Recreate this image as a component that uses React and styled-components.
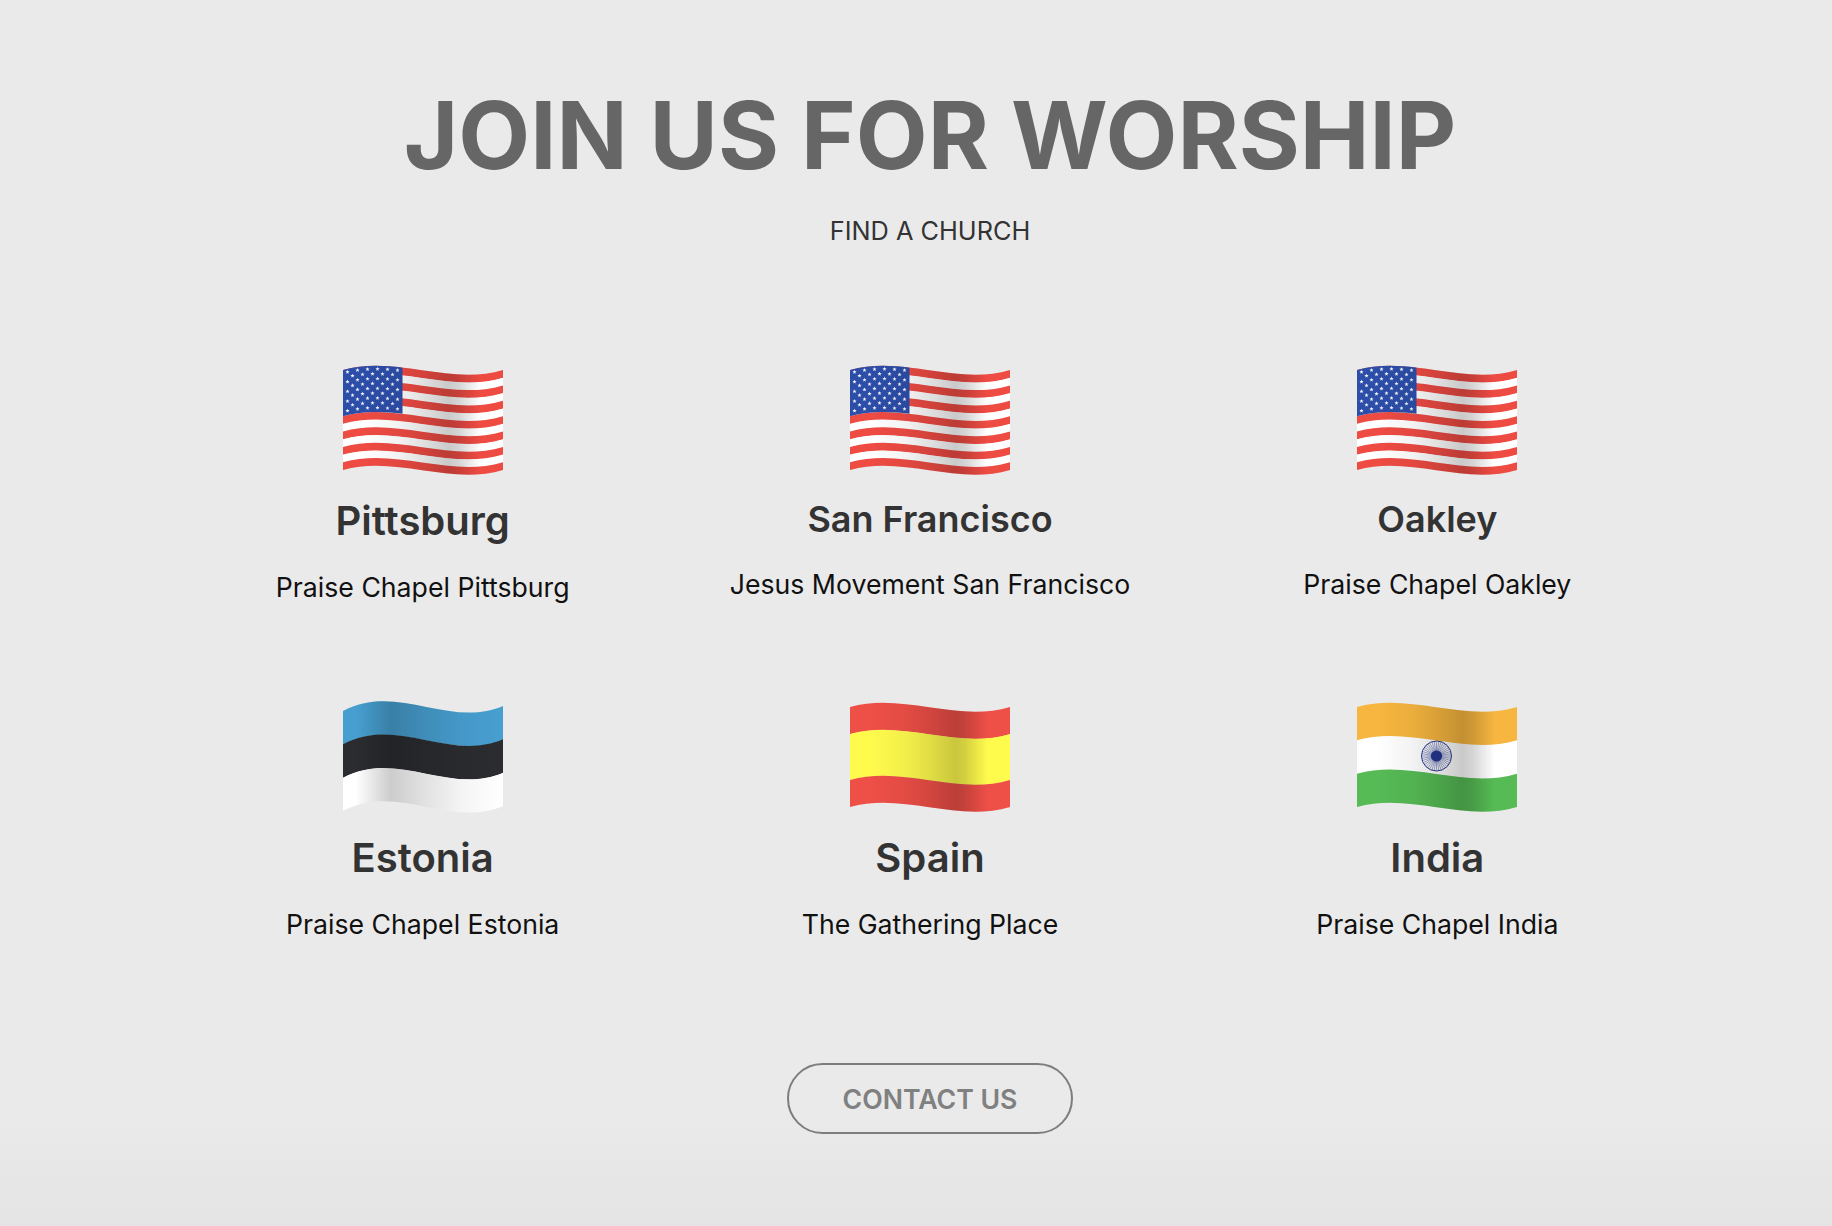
import React from "react";
import styled, { createGlobalStyle } from "styled-components";

const GlobalStyle = createGlobalStyle`
  html, body {
    margin: 0;
    padding: 0;
    background-color: #eaeaea;
  }
`;

const Page = styled.main`
  box-sizing: border-box;
  min-height: 1226px;
  padding: 85px 141px 0 169px;
  background: linear-gradient(#eaeaea 91%, #e4e4e4 100%);
  font-family: Inter, "Liberation Sans", sans-serif;
  display: flex;
  flex-direction: column;
  align-items: center;
`;

const Title = styled.h1`
  margin: 0;
  font-size: 93.3px;
  line-height: 102px;
  font-weight: 700;
  color: #666666;
  text-align: center;
`;

const Subtitle = styled.p`
  margin: 28px 0 0;
  font-size: 25.3px;
  line-height: 32px;
  font-weight: 400;
  color: #333333;
  text-align: center;
`;

const ChurchGrid = styled.section`
  width: 100%;
  margin-top: 117px;
  display: grid;
  grid-template-columns: repeat(3, 1fr);
  grid-auto-rows: 337px;
`;

const Church = styled.article`
  display: flex;
  flex-direction: column;
  align-items: center;
`;

const FlagArt = styled.svg`
  display: block;
  width: 160px;
  height: 112px;
  filter: blur(0.4px);
`;

const City = styled.h2`
  margin: ${(p) => (p.$large ? "23px" : "21px")} 0 0;
  font-size: ${(p) => (p.$large ? "40px" : "36px")};
  line-height: 44px;
  font-weight: 600;
  color: #333333;
`;

const Congregation = styled.p`
  margin: ${(p) => (p.$large ? "27px" : "26px")} 0 0;
  font-size: 26.67px;
  line-height: 34px;
  font-weight: 400;
  color: #111111;
`;

const ContactButton = styled.a`
  box-sizing: border-box;
  margin-top: 25px;
  width: 286px;
  height: 71px;
  display: flex;
  align-items: center;
  justify-content: center;
  border: 2px solid #7d7d7d;
  border-radius: 36px;
  font-size: 26.67px;
  font-weight: 600;
  color: #808080;
`;

const WIDTH = 160;
const HEIGHT = 100;

const gentle = [5, -10, 21, 5];
const steep = [9, -20, 27, 4];

// x runs linearly along the cubic, so y can be read straight off the controls
const waveAt = (wave, x) => {
  const t = x / WIDTH;
  const u = 1 - t;
  return (
    u * u * u * wave[0] +
    3 * t * u * u * wave[1] +
    3 * t * t * u * wave[2] +
    t * t * t * wave[3]
  );
};

const band = (wave, from, to) => {
  const c1 = WIDTH / 3;
  const c2 = (WIDTH * 2) / 3;
  return [
    `M0 ${wave[0] + from}`,
    `C${c1} ${wave[1] + from} ${c2} ${wave[2] + from} ${WIDTH} ${wave[3] + from}`,
    `L${WIDTH} ${wave[3] + to}`,
    `C${c2} ${wave[2] + to} ${c1} ${wave[1] + to} 0 ${wave[0] + to}`,
    "Z",
  ].join(" ");
};

const star = (cx, cy, r) => {
  const points = [];
  for (let i = 0; i < 10; i++) {
    const radius = i % 2 === 0 ? r : r * 0.42;
    const angle = -Math.PI / 2 + (i * Math.PI) / 5;
    points.push(
      `${(cx + radius * Math.cos(angle)).toFixed(2)},${(cy + radius * Math.sin(angle)).toFixed(2)}`
    );
  }
  return points.join(" ");
};

function Shading({ id, stops }) {
  return (
    <linearGradient id={id} x1="0" y1="0" x2="1" y2="0">
      {stops.map(([offset, opacity]) => (
        <stop key={offset} offset={offset} stopColor="#000" stopOpacity={opacity} />
      ))}
    </linearGradient>
  );
}

const softFold = [
  [0, 0],
  [0.12, 0],
  [0.35, 0.05],
  [0.5, 0.12],
  [0.66, 0.21],
  [0.72, 0.17],
  [0.86, 0],
  [1, 0],
];

const earlyFold = [
  [0, 0],
  [0.08, 0],
  [0.3, 0.2],
  [0.5, 0.12],
  [0.75, 0.04],
  [1, 0],
];

function StripedFlag({ id, colors, weights, wave = gentle, fold = softFold, children }) {
  const sizes = weights || colors.map(() => HEIGHT / colors.length);
  let top = 0;
  return (
    <FlagArt viewBox="0 -1 160 112">
      <defs>
        <Shading id={`${id}-shade`} stops={fold} />
      </defs>
      {colors.map((color, i) => {
        const from = top;
        top += sizes[i];
        return <path key={i} d={band(wave, from, top + (i < colors.length - 1 ? 0.3 : 0))} fill={color} />;
      })}
      {children}
      <path d={band(wave, 0, HEIGHT)} fill={`url(#${id}-shade)`} />
    </FlagArt>
  );
}

function UsaFlag({ id }) {
  const colors = Array.from({ length: 13 }, (_, i) => (i % 2 === 0 ? "#ee4b43" : "#ffffff"));
  const stars = [];
  for (let row = 0; row < 9; row++) {
    const count = row % 2 === 0 ? 6 : 5;
    for (let col = 0; col < count; col++) {
      const x = (row % 2 === 0 ? 4.5 : 9.5) + col * 10;
      const y = waveAt(gentle, x) + 3.2 + row * 4.85;
      stars.push(<polygon key={`${row}-${col}`} points={star(x, y, 2.2)} fill="#f2f5fb" />);
    }
  }
  return (
    <StripedFlag id={id} colors={colors}>
      <clipPath id={`${id}-canton`}>
        <rect x="0" y="-1" width="59.5" height="112" />
      </clipPath>
      <path d={band(gentle, 0, (6 * HEIGHT) / 13)} fill="#2c4da8" clipPath={`url(#${id}-canton)`} />
      {stars}
    </StripedFlag>
  );
}

function IndiaFlag({ id }) {
  const cx = 79.5;
  const cy = 54;
  const spokes = Array.from({ length: 40 }, (_, i) => {
    const angle = (i * Math.PI) / 20;
    return (
      <line
        key={i}
        x1={cx}
        y1={cy}
        x2={cx + 14.5 * Math.cos(angle)}
        y2={cy + 14.5 * Math.sin(angle)}
        stroke="#24358f"
        strokeWidth="0.45"
      />
    );
  });
  return (
    <StripedFlag id={id} colors={["#f7b63f", "#ffffff", "#56bb55"]}>
      <circle cx={cx} cy={cy} r="15" fill="none" stroke="#24358f" strokeWidth="1" />
      {spokes}
      <circle cx={cx} cy={cy} r="5.6" fill="#24358f" />
    </StripedFlag>
  );
}

const flags = {
  usa: (id) => <UsaFlag id={id} />,
  estonia: (id) => (
    <StripedFlag id={id} colors={["#479fd0", "#2a2c30", "#ffffff"]} wave={steep} fold={earlyFold} />
  ),
  spain: (id) => <StripedFlag id={id} colors={["#ee4f47", "#fffb4d", "#ee4f47"]} weights={[27, 46, 27]} />,
  india: (id) => <IndiaFlag id={id} />,
};

const churches = [
  { city: "Pittsburg", name: "Praise Chapel Pittsburg", flag: "usa", large: true },
  { city: "San Francisco", name: "Jesus Movement San Francisco", flag: "usa" },
  { city: "Oakley", name: "Praise Chapel Oakley", flag: "usa" },
  { city: "Estonia", name: "Praise Chapel Estonia", flag: "estonia", large: true },
  { city: "Spain", name: "The Gathering Place", flag: "spain", large: true },
  { city: "India", name: "Praise Chapel India", flag: "india", large: true },
];

export default function App() {
  return (
    <>
      <GlobalStyle />
      <Page>
        <Title>JOIN US FOR WORSHIP</Title>
        <Subtitle>FIND A CHURCH</Subtitle>
        <ChurchGrid>
          {churches.map((church, i) => (
            <Church key={church.city}>
              {flags[church.flag](`flag-${i}`)}
              <City $large={church.large}>{church.city}</City>
              <Congregation $large={church.large}>{church.name}</Congregation>
            </Church>
          ))}
        </ChurchGrid>
        <ContactButton>CONTACT US</ContactButton>
      </Page>
    </>
  );
}
